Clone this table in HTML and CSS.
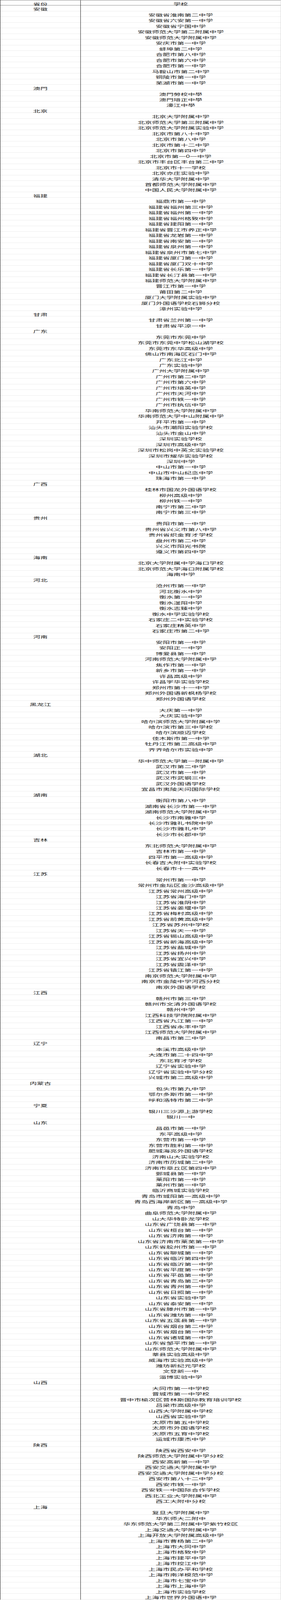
FILE: index.html
```html
<!DOCTYPE html>
<html lang="zh-CN">
<head>
<meta charset="utf-8">
<title>省份 学校</title>
<link rel="stylesheet" href="styles.css">
</head>
<body>
<div class="sheet">
<div class="row head"><div class="cell p"><span class="t">省份</span></div><div class="cell s"><span class="t">学校</span></div></div>
<div class="row"><div class="cell p"><span class="t">安徽</span></div><div class="cell s"></div></div>
<div class="row"><div class="cell p"></div><div class="cell s"><span class="t">安徽省淮南第二中学</span></div></div>
<div class="row"><div class="cell p"></div><div class="cell s"><span class="t">安徽省六安第一中学</span></div></div>
<div class="row"><div class="cell p"></div><div class="cell s"><span class="t">安徽省宁国中学</span></div></div>
<div class="row"><div class="cell p"></div><div class="cell s"><span class="t">安徽师范大学第二附属中学</span></div></div>
<div class="row"><div class="cell p"></div><div class="cell s"><span class="t">安徽师范大学附属中学</span></div></div>
<div class="row"><div class="cell p"></div><div class="cell s"><span class="t">安庆市第一中学</span></div></div>
<div class="row"><div class="cell p"></div><div class="cell s"><span class="t">蚌埠第二中学</span></div></div>
<div class="row"><div class="cell p"></div><div class="cell s"><span class="t">合肥市第八中学</span></div></div>
<div class="row"><div class="cell p"></div><div class="cell s"><span class="t">合肥市第六中学</span></div></div>
<div class="row"><div class="cell p"></div><div class="cell s"><span class="t">合肥市第一中学</span></div></div>
<div class="row"><div class="cell p"></div><div class="cell s"><span class="t">马鞍山市第二中学</span></div></div>
<div class="row"><div class="cell p"></div><div class="cell s"><span class="t">铜陵市第一中学</span></div></div>
<div class="row"><div class="cell p"></div><div class="cell s"><span class="t">芜湖市第一中学</span></div></div>
<div class="row"><div class="cell p"><span class="t">澳門</span></div><div class="cell s"></div></div>
<div class="row"><div class="cell p"></div><div class="cell s"><span class="t">澳門勞校中學</span></div></div>
<div class="row"><div class="cell p"></div><div class="cell s"><span class="t">澳門培正中學</span></div></div>
<div class="row"><div class="cell p"></div><div class="cell s"><span class="t">濠江中學</span></div></div>
<div class="row"><div class="cell p"><span class="t">北京</span></div><div class="cell s"></div></div>
<div class="row"><div class="cell p"></div><div class="cell s"><span class="t">北京大学附属中学</span></div></div>
<div class="row"><div class="cell p"></div><div class="cell s"><span class="t">北京师范大学第三附属中学</span></div></div>
<div class="row"><div class="cell p"></div><div class="cell s"><span class="t">北京师范大学附属实验中学</span></div></div>
<div class="row"><div class="cell p"></div><div class="cell s"><span class="t">北京市第八十中学</span></div></div>
<div class="row"><div class="cell p"></div><div class="cell s"><span class="t">北京市第八中学</span></div></div>
<div class="row"><div class="cell p"></div><div class="cell s"><span class="t">北京市第十二中学</span></div></div>
<div class="row"><div class="cell p"></div><div class="cell s"><span class="t">北京市第四中学</span></div></div>
<div class="row"><div class="cell p"></div><div class="cell s"><span class="t">北京市第一0一中学</span></div></div>
<div class="row"><div class="cell p"></div><div class="cell s"><span class="t">北京市丰台区丰台第二中学</span></div></div>
<div class="row"><div class="cell p"></div><div class="cell s"><span class="t">北京市十一学校</span></div></div>
<div class="row"><div class="cell p"></div><div class="cell s"><span class="t">北京亦庄实验中学</span></div></div>
<div class="row"><div class="cell p"></div><div class="cell s"><span class="t">清华大学附属中学</span></div></div>
<div class="row"><div class="cell p"></div><div class="cell s"><span class="t">首都师范大学附属中学</span></div></div>
<div class="row"><div class="cell p"></div><div class="cell s"><span class="t">中国人民大学附属中学</span></div></div>
<div class="row"><div class="cell p"><span class="t">福建</span></div><div class="cell s"></div></div>
<div class="row"><div class="cell p"></div><div class="cell s"><span class="t">福鼎市第一中学</span></div></div>
<div class="row"><div class="cell p"></div><div class="cell s"><span class="t">福建省福州第三中学</span></div></div>
<div class="row"><div class="cell p"></div><div class="cell s"><span class="t">福建省福州第一中学</span></div></div>
<div class="row"><div class="cell p"></div><div class="cell s"><span class="t">福建省福州格致中学</span></div></div>
<div class="row"><div class="cell p"></div><div class="cell s"><span class="t">福建省建阳第一中学</span></div></div>
<div class="row"><div class="cell p"></div><div class="cell s"><span class="t">福建省晋江市养正中学</span></div></div>
<div class="row"><div class="cell p"></div><div class="cell s"><span class="t">福建省龙岩第一中学</span></div></div>
<div class="row"><div class="cell p"></div><div class="cell s"><span class="t">福建省南安第一中学</span></div></div>
<div class="row"><div class="cell p"></div><div class="cell s"><span class="t">福建省泉州第一中学</span></div></div>
<div class="row"><div class="cell p"></div><div class="cell s"><span class="t">福建省泉州市第七中学</span></div></div>
<div class="row"><div class="cell p"></div><div class="cell s"><span class="t">福建省厦门第一中学</span></div></div>
<div class="row"><div class="cell p"></div><div class="cell s"><span class="t">福建省厦门双十中学</span></div></div>
<div class="row"><div class="cell p"></div><div class="cell s"><span class="t">福建省长乐第一中学</span></div></div>
<div class="row"><div class="cell p"></div><div class="cell s"><span class="t">福建省长汀县第一中学</span></div></div>
<div class="row"><div class="cell p"></div><div class="cell s"><span class="t">福建师范大学附属中学</span></div></div>
<div class="row"><div class="cell p"></div><div class="cell s"><span class="t">晋江市第一中学</span></div></div>
<div class="row"><div class="cell p"></div><div class="cell s"><span class="t">莆田第二中学</span></div></div>
<div class="row"><div class="cell p"></div><div class="cell s"><span class="t">厦门大学附属实验中学</span></div></div>
<div class="row"><div class="cell p"></div><div class="cell s"><span class="t">厦门外国语学校石狮分校</span></div></div>
<div class="row"><div class="cell p"></div><div class="cell s"><span class="t">漳州实验中学</span></div></div>
<div class="row"><div class="cell p"><span class="t">甘肃</span></div><div class="cell s"></div></div>
<div class="row"><div class="cell p"></div><div class="cell s"><span class="t">甘肃省兰州第一中学</span></div></div>
<div class="row"><div class="cell p"></div><div class="cell s"><span class="t">甘肃省平凉一中</span></div></div>
<div class="row"><div class="cell p"><span class="t">广东</span></div><div class="cell s"></div></div>
<div class="row"><div class="cell p"></div><div class="cell s"><span class="t">东莞市东莞中学</span></div></div>
<div class="row"><div class="cell p"></div><div class="cell s"><span class="t">东莞市东莞中学松山湖学校</span></div></div>
<div class="row"><div class="cell p"></div><div class="cell s"><span class="t">东莞市东华高级中学</span></div></div>
<div class="row"><div class="cell p"></div><div class="cell s"><span class="t">佛山市南海区石门中学</span></div></div>
<div class="row"><div class="cell p"></div><div class="cell s"><span class="t">广东北江中学</span></div></div>
<div class="row"><div class="cell p"></div><div class="cell s"><span class="t">广东实验中学</span></div></div>
<div class="row"><div class="cell p"></div><div class="cell s"><span class="t">广州大学附属中学</span></div></div>
<div class="row"><div class="cell p"></div><div class="cell s"><span class="t">广州市第二中学</span></div></div>
<div class="row"><div class="cell p"></div><div class="cell s"><span class="t">广州市第六中学</span></div></div>
<div class="row"><div class="cell p"></div><div class="cell s"><span class="t">广州市培英中学</span></div></div>
<div class="row"><div class="cell p"></div><div class="cell s"><span class="t">广州市天河中学</span></div></div>
<div class="row"><div class="cell p"></div><div class="cell s"><span class="t">广州市铁一中学</span></div></div>
<div class="row"><div class="cell p"></div><div class="cell s"><span class="t">广州市执信中学</span></div></div>
<div class="row"><div class="cell p"></div><div class="cell s"><span class="t">华南师范大学附属中学</span></div></div>
<div class="row"><div class="cell p"></div><div class="cell s"><span class="t">华南师范大学中山附属中学</span></div></div>
<div class="row"><div class="cell p"></div><div class="cell s"><span class="t">开平市第一中学</span></div></div>
<div class="row"><div class="cell p"></div><div class="cell s"><span class="t">汕头市潮阳实验学校</span></div></div>
<div class="row"><div class="cell p"></div><div class="cell s"><span class="t">汕头市金山中学</span></div></div>
<div class="row"><div class="cell p"></div><div class="cell s"><span class="t">深圳实验学校</span></div></div>
<div class="row"><div class="cell p"></div><div class="cell s"><span class="t">深圳市高级中学</span></div></div>
<div class="row"><div class="cell p"></div><div class="cell s"><span class="t">深圳市松岗中英文实验学校</span></div></div>
<div class="row"><div class="cell p"></div><div class="cell s"><span class="t">深圳市耀华实验学校</span></div></div>
<div class="row"><div class="cell p"></div><div class="cell s"><span class="t">深圳中学</span></div></div>
<div class="row"><div class="cell p"></div><div class="cell s"><span class="t">中山市第一中学</span></div></div>
<div class="row"><div class="cell p"></div><div class="cell s"><span class="t">中山市中山纪念中学</span></div></div>
<div class="row"><div class="cell p"></div><div class="cell s"><span class="t">珠海市第一中学</span></div></div>
<div class="row"><div class="cell p"><span class="t">广西</span></div><div class="cell s"></div></div>
<div class="row"><div class="cell p"></div><div class="cell s"><span class="t">桂林市国龙外国语学校</span></div></div>
<div class="row"><div class="cell p"></div><div class="cell s"><span class="t">柳州高级中学</span></div></div>
<div class="row"><div class="cell p"></div><div class="cell s"><span class="t">柳州铁一中学</span></div></div>
<div class="row"><div class="cell p"></div><div class="cell s"><span class="t">南宁市第二中学</span></div></div>
<div class="row"><div class="cell p"></div><div class="cell s"><span class="t">南宁市第三中学</span></div></div>
<div class="row"><div class="cell p"><span class="t">贵州</span></div><div class="cell s"></div></div>
<div class="row"><div class="cell p"></div><div class="cell s"><span class="t">贵阳市第一中学</span></div></div>
<div class="row"><div class="cell p"></div><div class="cell s"><span class="t">贵州省兴义市第八中学</span></div></div>
<div class="row"><div class="cell p"></div><div class="cell s"><span class="t">贵州省织金育才学校</span></div></div>
<div class="row"><div class="cell p"></div><div class="cell s"><span class="t">盘州市第二中学</span></div></div>
<div class="row"><div class="cell p"></div><div class="cell s"><span class="t">兴义市阳光书院</span></div></div>
<div class="row"><div class="cell p"></div><div class="cell s"><span class="t">遵义市第四中学</span></div></div>
<div class="row"><div class="cell p"><span class="t">海南</span></div><div class="cell s"></div></div>
<div class="row"><div class="cell p"></div><div class="cell s"><span class="t">北京大学附属中学海口学校</span></div></div>
<div class="row"><div class="cell p"></div><div class="cell s"><span class="t">北京师范大学海口附属学校</span></div></div>
<div class="row"><div class="cell p"></div><div class="cell s"><span class="t">海南中学</span></div></div>
<div class="row"><div class="cell p"><span class="t">河北</span></div><div class="cell s"></div></div>
<div class="row"><div class="cell p"></div><div class="cell s"><span class="t">沧州市第一中学</span></div></div>
<div class="row"><div class="cell p"></div><div class="cell s"><span class="t">河北衡水中学</span></div></div>
<div class="row"><div class="cell p"></div><div class="cell s"><span class="t">衡水第一中学</span></div></div>
<div class="row"><div class="cell p"></div><div class="cell s"><span class="t">衡水滏阳中学</span></div></div>
<div class="row"><div class="cell p"></div><div class="cell s"><span class="t">衡水志臻中学</span></div></div>
<div class="row"><div class="cell p"></div><div class="cell s"><span class="t">衡水中学实验学校</span></div></div>
<div class="row"><div class="cell p"></div><div class="cell s"><span class="t">石家庄二中实验学校</span></div></div>
<div class="row"><div class="cell p"></div><div class="cell s"><span class="t">石家庄精英中学</span></div></div>
<div class="row"><div class="cell p"></div><div class="cell s"><span class="t">石家庄市第二中学</span></div></div>
<div class="row"><div class="cell p"><span class="t">河南</span></div><div class="cell s"></div></div>
<div class="row"><div class="cell p"></div><div class="cell s"><span class="t">安阳市第一中学</span></div></div>
<div class="row"><div class="cell p"></div><div class="cell s"><span class="t">安阳正一中学</span></div></div>
<div class="row"><div class="cell p"></div><div class="cell s"><span class="t">博爱县第一中学</span></div></div>
<div class="row"><div class="cell p"></div><div class="cell s"><span class="t">河南师范大学附属中学</span></div></div>
<div class="row"><div class="cell p"></div><div class="cell s"><span class="t">焦作市第一中学</span></div></div>
<div class="row"><div class="cell p"></div><div class="cell s"><span class="t">新乡市第一中学</span></div></div>
<div class="row"><div class="cell p"></div><div class="cell s"><span class="t">许昌高级中学</span></div></div>
<div class="row"><div class="cell p"></div><div class="cell s"><span class="t">许昌宇华实验学校</span></div></div>
<div class="row"><div class="cell p"></div><div class="cell s"><span class="t">郑州市第十一中学</span></div></div>
<div class="row"><div class="cell p"></div><div class="cell s"><span class="t">郑州外国语新枫杨学校</span></div></div>
<div class="row"><div class="cell p"></div><div class="cell s"><span class="t">郑州外国语学校</span></div></div>
<div class="row"><div class="cell p"><span class="t">黑龙江</span></div><div class="cell s"></div></div>
<div class="row"><div class="cell p"></div><div class="cell s"><span class="t">大庆第一中学</span></div></div>
<div class="row"><div class="cell p"></div><div class="cell s"><span class="t">大庆实验中学</span></div></div>
<div class="row"><div class="cell p"></div><div class="cell s"><span class="t">哈尔滨师范大学附属中学</span></div></div>
<div class="row"><div class="cell p"></div><div class="cell s"><span class="t">哈尔滨市第三中学校</span></div></div>
<div class="row"><div class="cell p"></div><div class="cell s"><span class="t">哈尔滨顺迈学校</span></div></div>
<div class="row"><div class="cell p"></div><div class="cell s"><span class="t">佳木斯市第一中学</span></div></div>
<div class="row"><div class="cell p"></div><div class="cell s"><span class="t">牡丹江市第二高级中学</span></div></div>
<div class="row"><div class="cell p"></div><div class="cell s"><span class="t">齐齐哈尔市实验中学</span></div></div>
<div class="row"><div class="cell p"><span class="t">湖北</span></div><div class="cell s"></div></div>
<div class="row"><div class="cell p"></div><div class="cell s"><span class="t">华中师范大学第一附属中学</span></div></div>
<div class="row"><div class="cell p"></div><div class="cell s"><span class="t">武汉市第二中学</span></div></div>
<div class="row"><div class="cell p"></div><div class="cell s"><span class="t">武汉市第一中学</span></div></div>
<div class="row"><div class="cell p"></div><div class="cell s"><span class="t">武汉市武钢三中</span></div></div>
<div class="row"><div class="cell p"></div><div class="cell s"><span class="t">武汉外国语学校</span></div></div>
<div class="row"><div class="cell p"></div><div class="cell s"><span class="t">宜昌市夷陵天问国际学校</span></div></div>
<div class="row"><div class="cell p"><span class="t">湖南</span></div><div class="cell s"></div></div>
<div class="row"><div class="cell p"></div><div class="cell s"><span class="t">衡阳市第八中学</span></div></div>
<div class="row"><div class="cell p"></div><div class="cell s"><span class="t">湖南省长沙市第一中学</span></div></div>
<div class="row"><div class="cell p"></div><div class="cell s"><span class="t">湖南师范大学附属中学</span></div></div>
<div class="row"><div class="cell p"></div><div class="cell s"><span class="t">长沙市南雅中学</span></div></div>
<div class="row"><div class="cell p"></div><div class="cell s"><span class="t">长沙市雅礼书院中学</span></div></div>
<div class="row"><div class="cell p"></div><div class="cell s"><span class="t">长沙市雅礼中学</span></div></div>
<div class="row"><div class="cell p"></div><div class="cell s"><span class="t">长沙市长郡中学</span></div></div>
<div class="row"><div class="cell p"><span class="t">吉林</span></div><div class="cell s"></div></div>
<div class="row"><div class="cell p"></div><div class="cell s"><span class="t">东北师范大学附属中学</span></div></div>
<div class="row"><div class="cell p"></div><div class="cell s"><span class="t">吉林市第一中学</span></div></div>
<div class="row"><div class="cell p"></div><div class="cell s"><span class="t">四平市第一高级中学</span></div></div>
<div class="row"><div class="cell p"></div><div class="cell s"><span class="t">长春吉大附中实验学校</span></div></div>
<div class="row"><div class="cell p"></div><div class="cell s"><span class="t">长春市十一高中</span></div></div>
<div class="row"><div class="cell p"><span class="t">江苏</span></div><div class="cell s"></div></div>
<div class="row"><div class="cell p"></div><div class="cell s"><span class="t">常州市第一中学</span></div></div>
<div class="row"><div class="cell p"></div><div class="cell s"><span class="t">常州市金坛区金沙高级中学</span></div></div>
<div class="row"><div class="cell p"></div><div class="cell s"><span class="t">江苏省常州高级中学</span></div></div>
<div class="row"><div class="cell p"></div><div class="cell s"><span class="t">江苏省海门中学</span></div></div>
<div class="row"><div class="cell p"></div><div class="cell s"><span class="t">江苏省淮阴中学</span></div></div>
<div class="row"><div class="cell p"></div><div class="cell s"><span class="t">江苏省姜堰中学</span></div></div>
<div class="row"><div class="cell p"></div><div class="cell s"><span class="t">江苏省梅村高级中学</span></div></div>
<div class="row"><div class="cell p"></div><div class="cell s"><span class="t">江苏省前黄高级中学</span></div></div>
<div class="row"><div class="cell p"></div><div class="cell s"><span class="t">江苏省苏州中学校</span></div></div>
<div class="row"><div class="cell p"></div><div class="cell s"><span class="t">江苏省天一中学</span></div></div>
<div class="row"><div class="cell p"></div><div class="cell s"><span class="t">江苏省锡山高级中学</span></div></div>
<div class="row"><div class="cell p"></div><div class="cell s"><span class="t">江苏省新海高级中学</span></div></div>
<div class="row"><div class="cell p"></div><div class="cell s"><span class="t">江苏省盐城中学</span></div></div>
<div class="row"><div class="cell p"></div><div class="cell s"><span class="t">江苏省扬州中学</span></div></div>
<div class="row"><div class="cell p"></div><div class="cell s"><span class="t">江苏省宜兴中学</span></div></div>
<div class="row"><div class="cell p"></div><div class="cell s"><span class="t">江苏省震泽中学</span></div></div>
<div class="row"><div class="cell p"></div><div class="cell s"><span class="t">江苏省镇江第一中学</span></div></div>
<div class="row"><div class="cell p"></div><div class="cell s"><span class="t">南京师范大学附属中学</span></div></div>
<div class="row"><div class="cell p"></div><div class="cell s"><span class="t">南京市金陵中学河西分校</span></div></div>
<div class="row"><div class="cell p"></div><div class="cell s"><span class="t">南京外国语学校</span></div></div>
<div class="row"><div class="cell p"><span class="t">江西</span></div><div class="cell s"></div></div>
<div class="row"><div class="cell p"></div><div class="cell s"><span class="t">赣州市第三中学</span></div></div>
<div class="row"><div class="cell p"></div><div class="cell s"><span class="t">赣州市文清外国语学校</span></div></div>
<div class="row"><div class="cell p"></div><div class="cell s"><span class="t">赣州中学</span></div></div>
<div class="row"><div class="cell p"></div><div class="cell s"><span class="t">江西科技学院附属中学</span></div></div>
<div class="row"><div class="cell p"></div><div class="cell s"><span class="t">江西省九江第一中学</span></div></div>
<div class="row"><div class="cell p"></div><div class="cell s"><span class="t">江西省永丰中学</span></div></div>
<div class="row"><div class="cell p"></div><div class="cell s"><span class="t">江西师范大学附属中学</span></div></div>
<div class="row"><div class="cell p"></div><div class="cell s"><span class="t">南昌市第二中学</span></div></div>
<div class="row"><div class="cell p"><span class="t">辽宁</span></div><div class="cell s"></div></div>
<div class="row"><div class="cell p"></div><div class="cell s"><span class="t">本溪市高级中学</span></div></div>
<div class="row"><div class="cell p"></div><div class="cell s"><span class="t">大连市第二十四中学</span></div></div>
<div class="row"><div class="cell p"></div><div class="cell s"><span class="t">东北育才学校</span></div></div>
<div class="row"><div class="cell p"></div><div class="cell s"><span class="t">辽宁省实验中学</span></div></div>
<div class="row"><div class="cell p"></div><div class="cell s"><span class="t">辽宁省实验中学分校</span></div></div>
<div class="row"><div class="cell p"></div><div class="cell s"><span class="t">兴城市第二高级中学</span></div></div>
<div class="row"><div class="cell p"><span class="t">内蒙古</span></div><div class="cell s"></div></div>
<div class="row"><div class="cell p"></div><div class="cell s"><span class="t">包头市第九中学</span></div></div>
<div class="row"><div class="cell p"></div><div class="cell s"><span class="t">鄂尔多斯市第一中学</span></div></div>
<div class="row"><div class="cell p"></div><div class="cell s"><span class="t">呼和浩特市第二中学</span></div></div>
<div class="row"><div class="cell p"><span class="t">宁夏</span></div><div class="cell s"></div></div>
<div class="row"><div class="cell p"></div><div class="cell s"><span class="t">银川三沙源上游学校</span></div></div>
<div class="row"><div class="cell p"></div><div class="cell s"><span class="t">银川一中</span></div></div>
<div class="row"><div class="cell p"><span class="t">山东</span></div><div class="cell s"></div></div>
<div class="row"><div class="cell p"></div><div class="cell s"><span class="t">昌邑市第一中学</span></div></div>
<div class="row"><div class="cell p"></div><div class="cell s"><span class="t">东平高级中学</span></div></div>
<div class="row"><div class="cell p"></div><div class="cell s"><span class="t">东营市第一中学</span></div></div>
<div class="row"><div class="cell p"></div><div class="cell s"><span class="t">东营市胜利第一中学</span></div></div>
<div class="row"><div class="cell p"></div><div class="cell s"><span class="t">肥城海亮外国语学校</span></div></div>
<div class="row"><div class="cell p"></div><div class="cell s"><span class="t">济南山大实验学校</span></div></div>
<div class="row"><div class="cell p"></div><div class="cell s"><span class="t">济南市历城第二中学</span></div></div>
<div class="row"><div class="cell p"></div><div class="cell s"><span class="t">济南市章丘区第四中学</span></div></div>
<div class="row"><div class="cell p"></div><div class="cell s"><span class="t">鄄城县第一中学</span></div></div>
<div class="row"><div class="cell p"></div><div class="cell s"><span class="t">莱阳市第一中学</span></div></div>
<div class="row"><div class="cell p"></div><div class="cell s"><span class="t">莱州市第一中学</span></div></div>
<div class="row"><div class="cell p"></div><div class="cell s"><span class="t">临沂商城实验学校</span></div></div>
<div class="row"><div class="cell p"></div><div class="cell s"><span class="t">青岛市城阳第一高级中学</span></div></div>
<div class="row"><div class="cell p"></div><div class="cell s"><span class="t">青岛西海岸新区第一高级中学</span></div></div>
<div class="row"><div class="cell p"></div><div class="cell s"><span class="t">青岛中学</span></div></div>
<div class="row"><div class="cell p"></div><div class="cell s"><span class="t">曲阜师范大学附属中学</span></div></div>
<div class="row"><div class="cell p"></div><div class="cell s"><span class="t">山大华特卧龙学校</span></div></div>
<div class="row"><div class="cell p"></div><div class="cell s"><span class="t">山东省广饶县第一中学</span></div></div>
<div class="row"><div class="cell p"></div><div class="cell s"><span class="t">山东省桓台第一中学</span></div></div>
<div class="row"><div class="cell p"></div><div class="cell s"><span class="t">山东省济南第一中学</span></div></div>
<div class="row"><div class="cell p"></div><div class="cell s"><span class="t">山东省济南市莱芜第一中学</span></div></div>
<div class="row"><div class="cell p"></div><div class="cell s"><span class="t">山东省胶州市第一中学</span></div></div>
<div class="row"><div class="cell p"></div><div class="cell s"><span class="t">山东省聊城第一中学</span></div></div>
<div class="row"><div class="cell p"></div><div class="cell s"><span class="t">山东省临沂第四中学</span></div></div>
<div class="row"><div class="cell p"></div><div class="cell s"><span class="t">山东省临沂第一中学</span></div></div>
<div class="row"><div class="cell p"></div><div class="cell s"><span class="t">山东省平度第一中学</span></div></div>
<div class="row"><div class="cell p"></div><div class="cell s"><span class="t">山东省平邑第一中学</span></div></div>
<div class="row"><div class="cell p"></div><div class="cell s"><span class="t">山东省青岛第二中学</span></div></div>
<div class="row"><div class="cell p"></div><div class="cell s"><span class="t">山东省青州第一中学</span></div></div>
<div class="row"><div class="cell p"></div><div class="cell s"><span class="t">山东省日照第一中学</span></div></div>
<div class="row"><div class="cell p"></div><div class="cell s"><span class="t">山东省实验中学</span></div></div>
<div class="row"><div class="cell p"></div><div class="cell s"><span class="t">山东省泰安第一中学</span></div></div>
<div class="row"><div class="cell p"></div><div class="cell s"><span class="t">山东省滕州市第一中学</span></div></div>
<div class="row"><div class="cell p"></div><div class="cell s"><span class="t">山东省潍坊第一中学</span></div></div>
<div class="row"><div class="cell p"></div><div class="cell s"><span class="t">山东省五莲县第一中学</span></div></div>
<div class="row"><div class="cell p"></div><div class="cell s"><span class="t">山东省烟台第二中学</span></div></div>
<div class="row"><div class="cell p"></div><div class="cell s"><span class="t">山东省烟台第一中学</span></div></div>
<div class="row"><div class="cell p"></div><div class="cell s"><span class="t">山东省诸城第一中学</span></div></div>
<div class="row"><div class="cell p"></div><div class="cell s"><span class="t">山东省邹平市第一中学</span></div></div>
<div class="row"><div class="cell p"></div><div class="cell s"><span class="t">山东师范大学附属中学</span></div></div>
<div class="row"><div class="cell p"></div><div class="cell s"><span class="t">莘县实验高级中学</span></div></div>
<div class="row"><div class="cell p"></div><div class="cell s"><span class="t">威海市实验高级中学</span></div></div>
<div class="row"><div class="cell p"></div><div class="cell s"><span class="t">潍坊新纪元学校</span></div></div>
<div class="row"><div class="cell p"></div><div class="cell s"><span class="t">文登新一中</span></div></div>
<div class="row"><div class="cell p"></div><div class="cell s"><span class="t">淄博实验中学</span></div></div>
<div class="row"><div class="cell p"><span class="t">山西</span></div><div class="cell s"></div></div>
<div class="row"><div class="cell p"></div><div class="cell s"><span class="t">大同市第一中学校</span></div></div>
<div class="row"><div class="cell p"></div><div class="cell s"><span class="t">晋城市第一中学校</span></div></div>
<div class="row"><div class="cell p"></div><div class="cell s"><span class="t">晋中市榆次区普林斯国际教育培训学校</span></div></div>
<div class="row"><div class="cell p"></div><div class="cell s"><span class="t">吕梁市高级中学</span></div></div>
<div class="row"><div class="cell p"></div><div class="cell s"><span class="t">山西大学附属中学校</span></div></div>
<div class="row"><div class="cell p"></div><div class="cell s"><span class="t">山西省实验中学</span></div></div>
<div class="row"><div class="cell p"></div><div class="cell s"><span class="t">太原市第五中学校</span></div></div>
<div class="row"><div class="cell p"></div><div class="cell s"><span class="t">太原市外国语学校</span></div></div>
<div class="row"><div class="cell p"></div><div class="cell s"><span class="t">太原市五育中学校</span></div></div>
<div class="row"><div class="cell p"></div><div class="cell s"><span class="t">运城市康杰中学</span></div></div>
<div class="row"><div class="cell p"><span class="t">陕西</span></div><div class="cell s"></div></div>
<div class="row"><div class="cell p"></div><div class="cell s"><span class="t">陕西省西安中学</span></div></div>
<div class="row"><div class="cell p"></div><div class="cell s"><span class="t">陕西师范大学附属中学分校</span></div></div>
<div class="row"><div class="cell p"></div><div class="cell s"><span class="t">西安高新第一中学</span></div></div>
<div class="row"><div class="cell p"></div><div class="cell s"><span class="t">西安交通大学附属中学</span></div></div>
<div class="row"><div class="cell p"></div><div class="cell s"><span class="t">西安交通大学附属中学分校</span></div></div>
<div class="row"><div class="cell p"></div><div class="cell s"><span class="t">西安市第八十二中学</span></div></div>
<div class="row"><div class="cell p"></div><div class="cell s"><span class="t">西安市铁一中学</span></div></div>
<div class="row"><div class="cell p"></div><div class="cell s"><span class="t">西安铁一中国际合作学校</span></div></div>
<div class="row"><div class="cell p"></div><div class="cell s"><span class="t">西北工业大学附属中学</span></div></div>
<div class="row"><div class="cell p"></div><div class="cell s"><span class="t">西工大附中分校</span></div></div>
<div class="row"><div class="cell p"><span class="t">上海</span></div><div class="cell s"></div></div>
<div class="row"><div class="cell p"></div><div class="cell s"><span class="t">复旦大学附属中学</span></div></div>
<div class="row"><div class="cell p"></div><div class="cell s"><span class="t">华东师大二附中</span></div></div>
<div class="row"><div class="cell p"></div><div class="cell s"><span class="t">华东师范大学第二附属中学紫竹校区</span></div></div>
<div class="row"><div class="cell p"></div><div class="cell s"><span class="t">上海交通大学附属中学</span></div></div>
<div class="row"><div class="cell p"></div><div class="cell s"><span class="t">上海开放大学附属高级中学</span></div></div>
<div class="row"><div class="cell p"></div><div class="cell s"><span class="t">上海市曹杨第二中学</span></div></div>
<div class="row"><div class="cell p"></div><div class="cell s"><span class="t">上海市大同中学</span></div></div>
<div class="row"><div class="cell p"></div><div class="cell s"><span class="t">上海市格致中学</span></div></div>
<div class="row"><div class="cell p"></div><div class="cell s"><span class="t">上海市建平中学</span></div></div>
<div class="row"><div class="cell p"></div><div class="cell s"><span class="t">上海市控江中学</span></div></div>
<div class="row"><div class="cell p"></div><div class="cell s"><span class="t">上海市民办平和学校</span></div></div>
<div class="row"><div class="cell p"></div><div class="cell s"><span class="t">上海市南洋模范中学</span></div></div>
<div class="row"><div class="cell p"></div><div class="cell s"><span class="t">上海市七宝中学</span></div></div>
<div class="row"><div class="cell p"></div><div class="cell s"><span class="t">上海市上海中学</span></div></div>
<div class="row"><div class="cell p"></div><div class="cell s"><span class="t">上海市实验学校</span></div></div>
<div class="row"><div class="cell p"></div><div class="cell s"><span class="t">上海市世界外国语中学</span></div></div>
</div>
</body>
</html>
```

FILE: styles.css
```css
html, body {
  margin: 0;
  padding: 0;
  background: #ffffff;
}

.sheet {
  width: 720px;
  box-sizing: border-box;
  border-left: 1px solid #1a1a1a;
  border-right: 1px solid #d6d6d6;
  font-family: "Noto Sans CJK SC", "Noto Sans", sans-serif;
  font-size: 18.4px;
  color: #222222;
}

.row {
  display: grid;
  grid-template-columns: 205px 1fr;
  height: 14.4735px;
  box-sizing: border-box;
  border-bottom: 1px solid #ececec;
}

.row.head {
  border-top: 1px solid #8a8a8a;
  border-bottom: 1px solid #8f8f8f;
}

.cell {
  display: flex;
  align-items: center;
  justify-content: center;
  line-height: 1;
  white-space: nowrap;
}

.cell.s {
  border-left: 1px solid #1a1a1a;
}

.t {
  display: inline-block;
  transform: scaleY(0.5231);
}
```
